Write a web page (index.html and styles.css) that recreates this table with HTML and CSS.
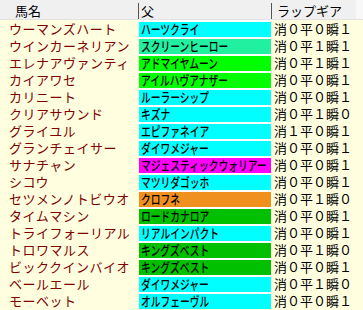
FILE: index.html
```html
<!DOCTYPE html>
<html lang="ja">
<head>
<meta charset="utf-8">
<title>ラップギア</title>
<link rel="stylesheet" href="styles.css">
</head>
<body>
<div class="list">
  <div class="head">
    <div class="h h-name">馬名</div>
    <div class="h h-sire">父</div>
    <div class="h h-gear">ラップギア</div>
    <div class="h-fill"></div>
  </div>
  <div class="row"><div class="name">ウーマンズハート</div><div class="sire cyan"><span>ハーツクライ</span></div><div class="gear">消０平０瞬１</div></div>
  <div class="row"><div class="name">ウインカーネリアン</div><div class="sire mint"><span>スクリーンヒーロー</span></div><div class="gear">消０平１瞬１</div></div>
  <div class="row"><div class="name">エレナアヴァンティ</div><div class="sire lime"><span>アドマイヤムーン</span></div><div class="gear">消０平１瞬１</div></div>
  <div class="row"><div class="name">カイアワセ</div><div class="sire lime"><span>アイルハヴアナザー</span></div><div class="gear">消０平０瞬１</div></div>
  <div class="row"><div class="name">カリニート</div><div class="sire cyan"><span>ルーラーシップ</span></div><div class="gear">消０平０瞬１</div></div>
  <div class="row"><div class="name">クリアサウンド</div><div class="sire cyan"><span>キズナ</span></div><div class="gear">消０平１瞬０</div></div>
  <div class="row"><div class="name">グライユル</div><div class="sire cyan"><span>エピファネイア</span></div><div class="gear">消１平０瞬１</div></div>
  <div class="row"><div class="name">グランチェイサー</div><div class="sire cyan"><span>ダイワメジャー</span></div><div class="gear">消０平０瞬１</div></div>
  <div class="row"><div class="name">サナチャン</div><div class="sire magenta"><span>マジェスティックウォリアー</span></div><div class="gear">消０平０瞬１</div></div>
  <div class="row"><div class="name">シコウ</div><div class="sire cyan"><span>マツリダゴッホ</span></div><div class="gear">消０平０瞬１</div></div>
  <div class="row"><div class="name">セツメンノトビウオ</div><div class="sire orange"><span>クロフネ</span></div><div class="gear">消０平１瞬０</div></div>
  <div class="row"><div class="name">タイムマシン</div><div class="sire green"><span>ロードカナロア</span></div><div class="gear">消０平０瞬１</div></div>
  <div class="row"><div class="name">トライフォーリアル</div><div class="sire cyan"><span>リアルインパクト</span></div><div class="gear">消０平０瞬１</div></div>
  <div class="row"><div class="name">トロワマルス</div><div class="sire green"><span>キングズベスト</span></div><div class="gear">消０平１瞬０</div></div>
  <div class="row"><div class="name">ビッククインバイオ</div><div class="sire green"><span>キングズベスト</span></div><div class="gear">消０平０瞬１</div></div>
  <div class="row"><div class="name">ベールエール</div><div class="sire cyan"><span>ダイワメジャー</span></div><div class="gear">消０平１瞬０</div></div>
  <div class="row"><div class="name">モーベット</div><div class="sire cyan"><span>オルフェーヴル</span></div><div class="gear">消０平０瞬１</div></div>
</div>
</body>
</html>
```

FILE: styles.css
```css
html, body {
  margin: 0;
  padding: 0;
  background: #ffffe0;
}

body {
  font-family: "Liberation Sans", "Noto Sans CJK JP", sans-serif;
  font-size: 13px;
  color: #000;
}

.list {
  display: flex;
  flex-direction: column;
}

.head {
  display: grid;
  grid-template-columns: 139px 132px 85px 1fr;
  height: 19px;
  background: #f0f0f0;
  border-bottom: 1px solid #e2e2e2;
}

.h {
  margin-top: 3px;
  height: 16px;
  line-height: 16px;
  padding-top: 1px;
  box-sizing: border-box;
  white-space: nowrap;
}

.h-name {
  padding-left: 15px;
  border-right: 1px solid #555;
}

.h-sire {
  padding-left: 2px;
}

.h-gear {
  padding-left: 5px;
  border-left: 1px solid #555;
}

.h-fill {
  background: #f8f8f8;
}

.row {
  display: grid;
  grid-template-columns: 139px 132px 1fr;
  height: 17px;
}

.name {
  padding-left: 9px;
  color: #800000;
  line-height: 15px;
  padding-top: 2px;
  white-space: nowrap;
  letter-spacing: 0.5px;
}

.sire {
  border-top: 2px solid #fff;
  height: 14px;
  line-height: 14px;
  padding-top: 1px;
  padding-left: 2px;
  white-space: nowrap;
}

.sire span {
  display: inline-block;
  transform: scaleX(0.75);
  transform-origin: left center;
  font-weight: 500;
}

.gear {
  padding-left: 3px;
  line-height: 15px;
  padding-top: 2px;
  white-space: nowrap;
}

.cyan { background-color: #00ffff; }
.mint { background-color: #20f0a0; }
.lime { background-color: #00ff00; }
.green { background-color: #00c000; }
.magenta { background-color: #ff00ff; }
.orange { background-color: #f0901e; }
```
